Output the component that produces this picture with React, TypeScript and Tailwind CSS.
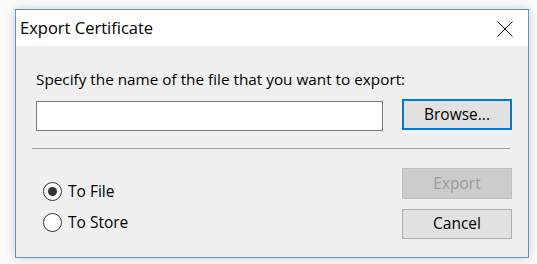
import { useState } from 'react';

function Radio({
  checked,
  label,
  onSelect,
}: {
  checked: boolean;
  label: string;
  onSelect: () => void;
}) {
  return (
    <button onClick={onSelect} className="flex h-[20px] items-center text-left">
      <span className="flex h-[19px] w-[19px] items-center justify-center rounded-full border border-[#333333] bg-white">
        {checked && <span className="h-[9px] w-[9px] rounded-full bg-[#333333]" />}
      </span>
      <span className="ml-[6px] text-[15.5px] leading-[20px] text-black">{label}</span>
    </button>
  );
}

export default function App() {
  const [target, setTarget] = useState<'file' | 'store'>('file');
  const [path, setPath] = useState('');

  return (
    <div
      className="h-[264px] w-[537px] bg-[#fbfbfb] pl-[15px] pt-[9px]"
      style={{ fontFamily: '"Open Sans", "Noto Sans", sans-serif' }}
    >
      <div className="flex h-[249px] w-[514px] flex-col border border-[#5a92c6] bg-[#f0f0f0] shadow-[0_0_10px_rgba(0,0,0,0.18)]">
        {/* Title bar */}
        <div className="flex h-[36px] items-center justify-between bg-white pl-[4px] pr-[15px]">
          <span className="text-[16.5px] leading-[22px] text-black">Export Certificate</span>
          <svg width="16" height="16" viewBox="0 0 16 16" className="mt-[2px]">
            <path d="M0.5 0.5 L15.5 15.5 M15.5 0.5 L0.5 15.5" stroke="#111" strokeWidth="1" fill="none" />
          </svg>
        </div>

        {/* Body */}
        <div className="flex flex-1 flex-col px-[16px] pt-[23px]">
          <p className="pl-[4px] text-[15.3px] leading-[20px] text-black">
            Specify the name of the file that you want to export:
          </p>
          <div className="mt-[10px] flex items-start justify-between pl-[4px]">
            <input
              value={path}
              onChange={(e) => setPath(e.target.value)}
              className="mt-[2px] h-[30px] w-[347px] border border-[#7a7a7a] bg-white px-1 text-[15px] outline-none"
            />
            <button className="h-[31px] w-[110px] border-2 border-[#0078d7] bg-[#e1e1e1] text-[15.5px] text-black">
              Browse...
            </button>
          </div>
          <div className="mr-[2px] mt-[17px] h-px bg-[#a0a0a0]" />

          <div className="mt-[19px] flex justify-between">
            <div className="flex flex-col gap-[11px] pl-[11px] pt-[13px]">
              <Radio checked={target === 'file'} label="To File" onSelect={() => setTarget('file')} />
              <Radio checked={target === 'store'} label="To Store" onSelect={() => setTarget('store')} />
            </div>
            <div className="flex flex-col gap-[10px]">
              <button
                disabled
                className="h-[31px] w-[110px] border border-[#bfbfbf] bg-[#cccccc] text-[15.5px] text-[#9a9a9a]"
              >
                Export
              </button>
              <button className="h-[30px] w-[110px] border border-[#adadad] bg-[#e1e1e1] text-[15.5px] text-black">
                Cancel
              </button>
            </div>
          </div>
        </div>
      </div>
    </div>
  );
}
